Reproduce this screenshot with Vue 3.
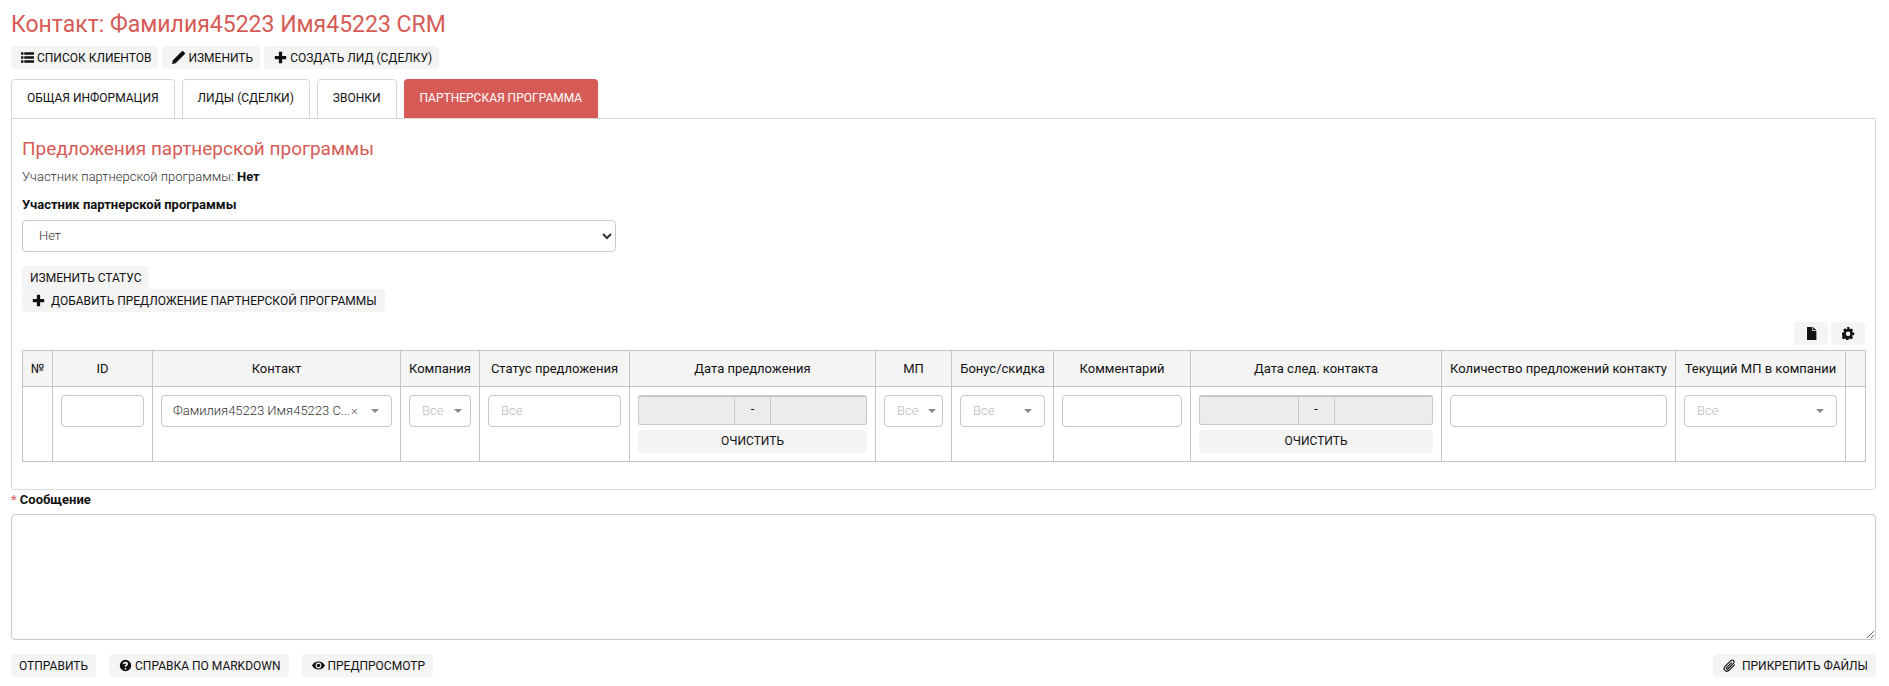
<script setup>
const cols = [30, 100, 248, 79, 150, 246, 76, 102, 137, 251, 234, 170, 20];
const heads = ['№', 'ID', 'Контакт', 'Компания', 'Статус предложения', 'Дата предложения', 'МП', 'Бонус/скидка', 'Комментарий', 'Дата след. контакта', 'Количество предложений контакту', 'Текущий МП в компании', ''];
</script>

<template>
  <div class="page">
    <h1 class="title">Контакт: Фамилия45223 Имя45223 CRM</h1>
    <div class="actions">
      <button class="btn">
        <svg class="ic" viewBox="0 0 16 16"><path d="M0 1.500h3v3H0zM4 1.500h12v3H4zM0 6.500h3v3H0zM4 6.500h12v3H4zM0 11.500h3v3H0zM4 11.500h12v3H4z"/></svg>
        Список клиентов
      </button>
      <button class="btn">
        <svg class="ic" viewBox="0 0 16 16"><path d="M0 16l1-4.500L11.500 1l3.500 3.500L4.500 15zM12.300.3a1 1 0 0 1 1.400 0l2 2a1 1 0 0 1 0 1.400l-.8.800-3.400-3.400z"/></svg>
        Изменить
      </button>
      <button class="btn">
        <svg class="ic" viewBox="0 0 16 16"><path d="M6 1h4v5h5v4h-5v5H6v-5H1V6h5z"/></svg>
        Создать лид (сделку)
      </button>
    </div>

    <nav class="tabs">
      <a class="tab">Общая информация</a>
      <a class="tab">Лиды (сделки)</a>
      <a class="tab">Звонки</a>
      <a class="tab active">Партнерская программа</a>
    </nav>

    <section class="panel">
      <h2 class="subtitle">Предложения партнерской программы</h2>
      <p class="status">Участник партнерской программы: <b>Нет</b></p>
      <label class="label">Участник партнерской программы</label>
      <select class="native"><option>Нет</option></select>
      <div class="stack">
        <button class="btn narrow">Изменить статус</button>
        <button class="btn add">
          <svg class="ic" viewBox="0 0 16 16"><path d="M6 1h4v5h5v4h-5v5H6v-5H1V6h5z"/></svg>
          Добавить предложение партнерской программы
        </button>
      </div>
      <div class="tools">
        <button class="btn tool">
          <svg class="ic" viewBox="0 0 16 16"><path d="M2.500 0H9v5h5v11H2.500zM10 0l4 4h-4z"/></svg>
        </button>
        <button class="btn tool">
          <svg class="ic" viewBox="0 0 16 16"><path fill-rule="evenodd" d="M6.500 0h3l.4 2.200 1.300.6L12.100 1.500l2.400 2.400-1.300 1.900.5 1.200 2.300.5v3l-2.300.4-.5 1.300 1.300 1.900-2.400 2.100-1.900-1.200-1.300.5-.4 2.300h-3l-.4-2.300-1.300-.5-1.900 1.200-2.400-2.100 1.300-1.900-.5-1.300L0 10.500v-3l2.300-.5.500-1.200L1.500 3.900 3.900 1.500l1.900 1.300 1.300-.6zM8 6a3 3 0 1 0 0 6 3 3 0 0 0 0-6z" transform="scale(.94)"/></svg>
        </button>
      </div>

      <table class="grid">
        <colgroup>
          <col v-for="(w, i) in cols" :key="i" :style="{ width: w + 'px' }" />
        </colgroup>
        <thead>
          <tr><th v-for="(h, i) in heads" :key="i">{{ h }}</th></tr>
        </thead>
        <tbody>
          <tr>
            <td></td>
            <td><div class="field"></div></td>
            <td>
              <div class="field sel contact">
                <span class="val">Фамилия45223 Имя45223 С...</span>
                <span class="clear">×</span>
                <i class="caret"></i>
              </div>
            </td>
            <td><div class="field sel ph tight"><span class="val">Все</span><i class="caret"></i></div></td>
            <td><div class="field ph text"><span>Все</span></div></td>
            <td>
              <div class="range"><span class="part"></span><span class="dash">-</span><span class="part"></span></div>
              <button class="btn clearbtn">Очистить</button>
            </td>
            <td><div class="field sel ph tight small"><span class="val">Все</span><i class="caret"></i></div></td>
            <td><div class="field sel ph"><span class="val">Все</span><i class="caret"></i></div></td>
            <td><div class="field"></div></td>
            <td>
              <div class="range"><span class="part"></span><span class="dash">-</span><span class="part"></span></div>
              <button class="btn clearbtn">Очистить</button>
            </td>
            <td><div class="field"></div></td>
            <td><div class="field sel ph"><span class="val">Все</span><i class="caret"></i></div></td>
            <td></td>
          </tr>
        </tbody>
      </table>
    </section>

    <label class="msg-label"><span class="req">*</span> Сообщение</label>
    <textarea class="message"></textarea>

    <div class="footer">
      <button class="btn">Отправить</button>
      <button class="btn helpbtn">
        <svg class="ic" viewBox="0 0 16 16"><path fill-rule="evenodd" d="M8 1a7 7 0 1 1 0 14A7 7 0 0 1 8 1zM7 11v2h2v-2zM8 3.500c-1.700 0-3 1-3.100 2.600l2 .3c.1-.7.500-1 1.100-1 .6 0 1 .3 1 .8 0 .5-.4.800-1 1.200-.8.500-1 1-1 1.600v.4h2v-.2c0-.3.200-.5.800-.9.800-.5 1.300-1.200 1.300-2.200C11.100 4.500 9.800 3.500 8 3.500z"/></svg>
        Справка по Markdown
      </button>
      <button class="btn eyebtn">
        <svg class="ic eye" viewBox="0 0 18 16"><path fill-rule="evenodd" d="M9 2.500c3.800 0 7 2.200 9 5.500-2 3.300-5.200 5.500-9 5.500S2 11.300 0 8c2-3.300 5.200-5.500 9-5.500zM9 4a4 4 0 1 0 0 8 4 4 0 0 0 0-8zM9 5.500a2.500 2.500 0 1 1 0 5 2.500 2.500 0 0 1 0-5z"/></svg>
        Предпросмотр
      </button>
      <button class="btn attach">
        <svg class="ic clip" viewBox="0 0 16 16"><path fill="none" stroke="#111" stroke-width="1.400" stroke-linecap="round" d="M14.200 7.200l-6.500 6.500c-1.500 1.500-3.900 1.800-5.300.4s-1.100-3.800.4-5.300l6.600-6.600c1-1 2.500-1.200 3.500-.3s.8 2.500-.2 3.500L6.300 12c-.5.500-1.300.7-1.800.2s-.3-1.300.2-1.800l5.700-5.700"/></svg>
        Прикрепить файлы
      </button>
    </div>
  </div>
</template>

<style>
html, body { background: #fff; }
</style>

<style scoped>
.page {
  padding: 0 13px 0 11px;
  font-family: Roboto, "Liberation Sans", sans-serif;
  font-size: 13px;
  color: #111;
  box-sizing: border-box;
  height: 686px;
  overflow: hidden;
}
.title {
  margin: 0;
  padding-top: 11px;
  font-size: 23px;
  line-height: 27px;
  font-weight: 400;
  color: #d65b56;
}
.btn {
  display: inline-flex;
  align-items: center;
  justify-content: center;
  gap: 3px;
  height: 23px;
  padding: 0 8px;
  border: 0;
  border-radius: 4px;
  background: #f4f4f4;
  color: #111;
  font-family: inherit;
  font-size: 12px;
  text-transform: uppercase;
  white-space: nowrap;
}
.ic { width: 13px; height: 13px; fill: #111; flex: none; }
.actions { display: flex; gap: 4px; margin-top: 8px; }
.actions .btn { padding: 0 7px 0 10px; }
.tabs { display: flex; gap: 7px; margin-top: 10px; height: 39px; }
.tab {
  display: flex;
  align-items: center;
  padding: 0 15px 2px;
  border: 1px solid #d8d8d8;
  border-bottom: 0;
  border-radius: 4px 4px 0 0;
  font-size: 12px;
  line-height: 16px;
  text-transform: uppercase;
  color: #111;
}
.tab.active { background: #d65b56; border-color: #d65b56; color: #fff; }
.panel {
  border: 1px solid #d8d8d8;
  border-radius: 0 0 4px 4px;
  height: 372px;
  box-sizing: border-box;
  padding: 0 10px;
}
.subtitle {
  margin: 19px 0 0;
  font-size: 19px;
  line-height: 22px;
  font-weight: 400;
  color: #d65b56;
}
.status { margin: 9px 0 0; line-height: 16px; color: #333; font-weight: 300; }
.status b { color: #111; font-weight: 700; }
.label { display: block; margin-top: 12px; line-height: 16px; font-weight: 700; }
.native {
  display: block;
  width: 594px;
  height: 32px;
  margin-top: 7px;
  padding: 0 12px 2px;
  border: 1px solid #c8c8c8;
  border-radius: 4px;
  background: #fff;
  color: #333;
  font-family: inherit;
  font-size: 13px;
  font-weight: 300;
}
.stack { display: flex; flex-direction: column; align-items: flex-start; margin-top: 14px; }
.narrow { text-transform: uppercase; }
.add { gap: 6px; padding: 0 8px 0 10px; }
.tools { display: flex; justify-content: flex-end; gap: 3px; margin-top: 10px; }
.tool { width: 34px; padding: 0; }
.grid {
  width: 1843px;
  margin-top: 5px;
  border-collapse: collapse;
  table-layout: fixed;
  border: 1px solid #c4c4c4;
}
.grid th, .grid td { border: 1px solid #c4c4c4; }
.grid th {
  height: 35px;
  padding: 0;
  background: #f4f4f4;
  font-weight: 400;
  font-size: 13px;
  color: #111;
  white-space: nowrap;
}
.grid td { height: 74px; padding: 8px 8px; vertical-align: top; box-sizing: border-box; }
.field {
  box-sizing: border-box;
  height: 32px;
  border: 1px solid #c8c8c8;
  border-radius: 4px;
  background: #fff;
  display: flex;
  align-items: center;
}
.sel { padding: 0 12px; }
.text { padding: 0 12px 1px; }
.val { flex: 1; min-width: 0; white-space: nowrap; overflow: hidden; line-height: 16px; margin-bottom: 1px; }
.contact { padding: 0 12px 0 11px; font-weight: 300; color: #333; }
.contact .val { flex: none; }
.clear { font-size: 12px; color: #666; margin: 0 0 0 1px; }
.contact .caret { margin-left: auto; }
.caret {
  flex: none;
  width: 0;
  height: 0;
  border-left: 4px solid transparent;
  border-right: 4px solid transparent;
  border-top: 4px solid #888;
}
.ph { color: #bbb; font-weight: 300; }
.sel .val { color: inherit; }
.tight { padding: 0 8px 0 12px; }
.small { padding: 0 6px 0 12px; }
.range {
  display: flex;
  height: 30px;
  box-sizing: border-box;
  border: 1px solid #c8c8c8;
  border-top-width: 2px;
  border-radius: 3px;
  background: #ececec;
}
.part { flex: 1; }
.dash {
  width: 35px;
  flex: none;
  text-align: center;
  line-height: 24px;
  border-left: 1px solid #c8c8c8;
  border-right: 1px solid #c8c8c8;
}
.clearbtn { display: flex; width: 100%; margin-top: 5px; padding-bottom: 1px; }
.msg-label { display: block; margin-top: 2px; line-height: 16px; font-weight: 700; }
.req { color: #e05a55; font-weight: 400; }
.message {
  display: block;
  box-sizing: border-box;
  width: 100%;
  height: 126px;
  margin: 6px 0 0;
  border: 1px solid #c8c8c8;
  border-radius: 4px;
  background: #fff;
}
.footer { display: flex; gap: 13px; margin-top: 14px; }
.footer .btn { padding: 0 8px; }
.footer .helpbtn { padding: 0 9px 0 10px; }
.footer .eyebtn { padding: 0 8px 0 10px; gap: 2px; }
.attach { margin-left: auto; gap: 6px; }
.footer .attach { padding: 0 8px 0 10px; }
.eye { width: 13px; }
</style>
